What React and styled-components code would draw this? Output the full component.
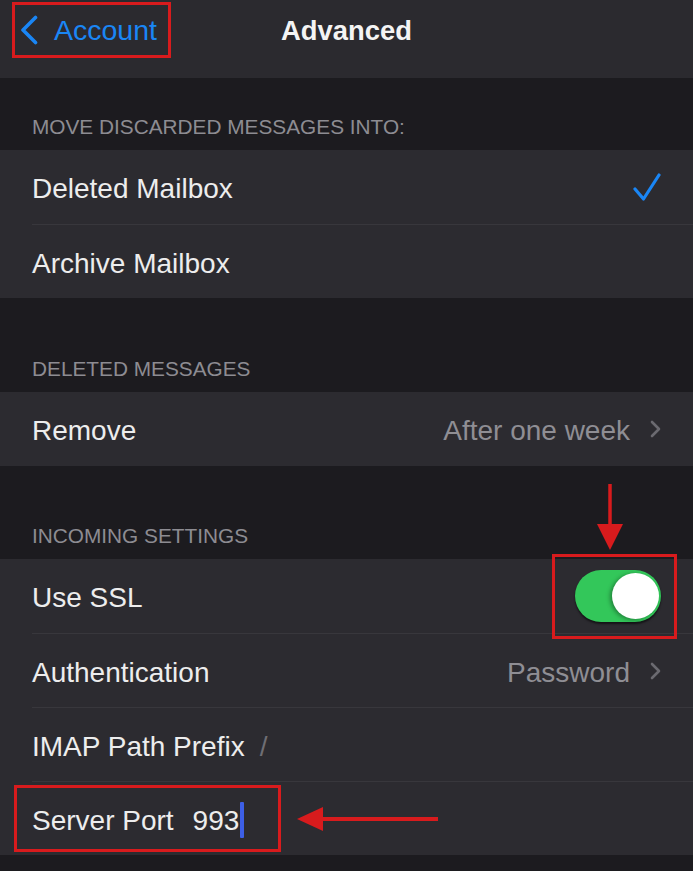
import React from "react";
import styled, { createGlobalStyle } from "styled-components";

const GlobalStyle = createGlobalStyle`
  html, body { margin: 0; padding: 0; background: #1c1b1f; }
  body { font-family: "Liberation Sans", Arial, sans-serif; -webkit-font-smoothing: antialiased; }
  * { box-sizing: border-box; }
`;

const RED = "#d81b1d";

const Screen = styled.div`
  width: 693px;
  min-height: 871px;
  background: #1c1b1f;
  overflow: hidden;
`;

const NavBar = styled.header`
  height: 78px;
  background: #2b2a2f;
  display: grid;
  grid-template-columns: 1fr auto 1fr;
  align-items: start;
  padding-top: 2px;
`;

const BackButton = styled.div`
  justify-self: start;
  margin-left: 12px;
  height: 56px;
  display: inline-flex;
  align-items: center;
  gap: 16px;
  padding: 0 11px 0 5px;
  border: 3px solid ${RED};
  color: #1a86f5;
  font-size: 28.5px;
`;

const Title = styled.div`
  line-height: 58px;
  font-size: 27.4px;
  font-weight: 700;
  color: #f4f4f4;
`;

const SectionHeader = styled.div`
  height: ${(p) => p.$h}px;
  display: flex;
  align-items: flex-end;
  padding: 0 32px 11px;
  font-size: 20.8px;
  line-height: 24px;
  color: #8d8c92;
  text-transform: uppercase;
`;

const Group = styled.div`
  background: #2c2b30;
`;

const Row = styled.div`
  padding-left: 32px;
`;

const RowBody = styled.div`
  height: 74px;
  display: flex;
  align-items: center;
  padding-right: 32px;
  border-top: ${(p) => (p.$divider ? "1px solid #38373c" : "none")};
  font-size: 28px;
  color: #ededed;
`;

const Label = styled.span`
  flex: ${(p) => (p.$grow ? 1 : "none")};
  padding-top: 4px;
`;

const Value = styled.span`
  color: #8f8e94;
  padding-top: 4px;
`;

const Disclosure = styled.span`
  display: inline-flex;
  align-items: center;
  gap: 20px;
`;

const InlineValue = styled.span`
  margin-left: ${(p) => p.$gap}px;
  padding-top: 4px;
  color: ${(p) => p.$color};
`;

const FieldGroup = styled.div`
  position: relative;
  height: 34px;
  display: flex;
  align-items: center;
  &::after {
    content: "";
    position: absolute;
    left: -18px;
    right: -37px;
    top: -17px;
    bottom: -16px;
    border: 3px solid ${RED};
    pointer-events: none;
  }
`;

const Cursor = styled.span`
  display: inline-block;
  width: 4px;
  height: 36px;
  margin-left: 1px;
  margin-top: 2px;
  background: #3d5fe6;
  border-radius: 1px;
`;

const Track = styled.div`
  position: relative;
  width: 86px;
  height: 52px;
  border-radius: 26px;
  background: #33c75a;
  box-shadow: 0 2px 2px rgba(0, 0, 0, 0.55);
  &::after {
    content: "";
    position: absolute;
    left: -23px;
    right: -16px;
    top: -16px;
    bottom: -17px;
    border: 3px solid ${RED};
    pointer-events: none;
  }
`;

const Knob = styled.div`
  position: absolute;
  top: 3px;
  right: 2px;
  width: 47px;
  height: 46px;
  border-radius: 50%;
  background: #ffffff;
  box-shadow: -2px 1px 4px rgba(0, 0, 0, 0.35);
`;

const DownArrow = styled.svg`
  position: absolute;
  left: 22px;
  top: -86px;
  width: 26px;
  height: 66px;
  overflow: visible;
`;

const LeftArrow = styled.svg`
  position: absolute;
  left: 265px;
  top: 3px;
  width: 141px;
  height: 28px;
  overflow: visible;
`;

const Chevron = () => (
  <svg width="11" height="18" viewBox="0 0 11 18">
    <path d="M2 2 L9 9 L2 16" fill="none" stroke="#6b6a70" strokeWidth="2.6" strokeLinecap="round" strokeLinejoin="round" />
  </svg>
);

const BackChevron = () => (
  <svg width="18" height="30" viewBox="0 0 18 30">
    <path d="M15.5 2.5 L3 15 L15.5 27.5" fill="none" stroke="#1a86f5" strokeWidth="3.6" strokeLinecap="round" strokeLinejoin="round" />
  </svg>
);

const Check = () => (
  <svg width="28" height="28" viewBox="0 0 28 28">
    <path d="M2 16 L10.5 26 L26 2" fill="none" stroke="#1a86f5" strokeWidth="3.2" strokeLinecap="round" strokeLinejoin="round" />
  </svg>
);

export default function App() {
  return (
    <>
      <GlobalStyle />
      <Screen>
        <NavBar>
          <BackButton>
            <BackChevron />
            <span>Account</span>
          </BackButton>
          <Title>Advanced</Title>
          <div />
        </NavBar>

        <SectionHeader $h={72}>Move discarded messages into:</SectionHeader>
        <Group>
          <Row>
            <RowBody>
              <Label $grow>Deleted Mailbox</Label>
              <Check />
            </RowBody>
          </Row>
          <Row>
            <RowBody $divider>
              <Label $grow>Archive Mailbox</Label>
            </RowBody>
          </Row>
        </Group>

        <SectionHeader $h={94}>Deleted messages</SectionHeader>
        <Group>
          <Row>
            <RowBody>
              <Label $grow>Remove</Label>
              <Disclosure>
                <Value>After one week</Value>
                <Chevron />
              </Disclosure>
            </RowBody>
          </Row>
        </Group>

        <SectionHeader $h={93}>Incoming settings</SectionHeader>
        <Group>
          <Row>
            <RowBody>
              <Label $grow>Use SSL</Label>
              <Track>
                <Knob />
                <DownArrow viewBox="0 0 26 66">
                  <line x1="13" y1="0" x2="13" y2="44" stroke={RED} strokeWidth="3.5" />
                  <polygon points="0,40 26,40 13,66" fill={RED} />
                </DownArrow>
              </Track>
            </RowBody>
          </Row>
          <Row>
            <RowBody $divider>
              <Label $grow>Authentication</Label>
              <Disclosure>
                <Value>Password</Value>
                <Chevron />
              </Disclosure>
            </RowBody>
          </Row>
          <Row>
            <RowBody $divider>
              <Label>IMAP Path Prefix</Label>
              <InlineValue $gap={15} $color="#6f6e74">/</InlineValue>
            </RowBody>
          </Row>
          <Row>
            <RowBody $divider>
              <FieldGroup>
                <Label>Server Port</Label>
                <InlineValue $gap={19} $color="#ededed">993</InlineValue>
                <Cursor />
                <LeftArrow viewBox="0 0 141 28">
                  <line x1="22" y1="14" x2="141" y2="14" stroke={RED} strokeWidth="4" />
                  <polygon points="0,14 26,2 26,26" fill={RED} />
                </LeftArrow>
              </FieldGroup>
            </RowBody>
          </Row>
        </Group>
      </Screen>
    </>
  );
}
